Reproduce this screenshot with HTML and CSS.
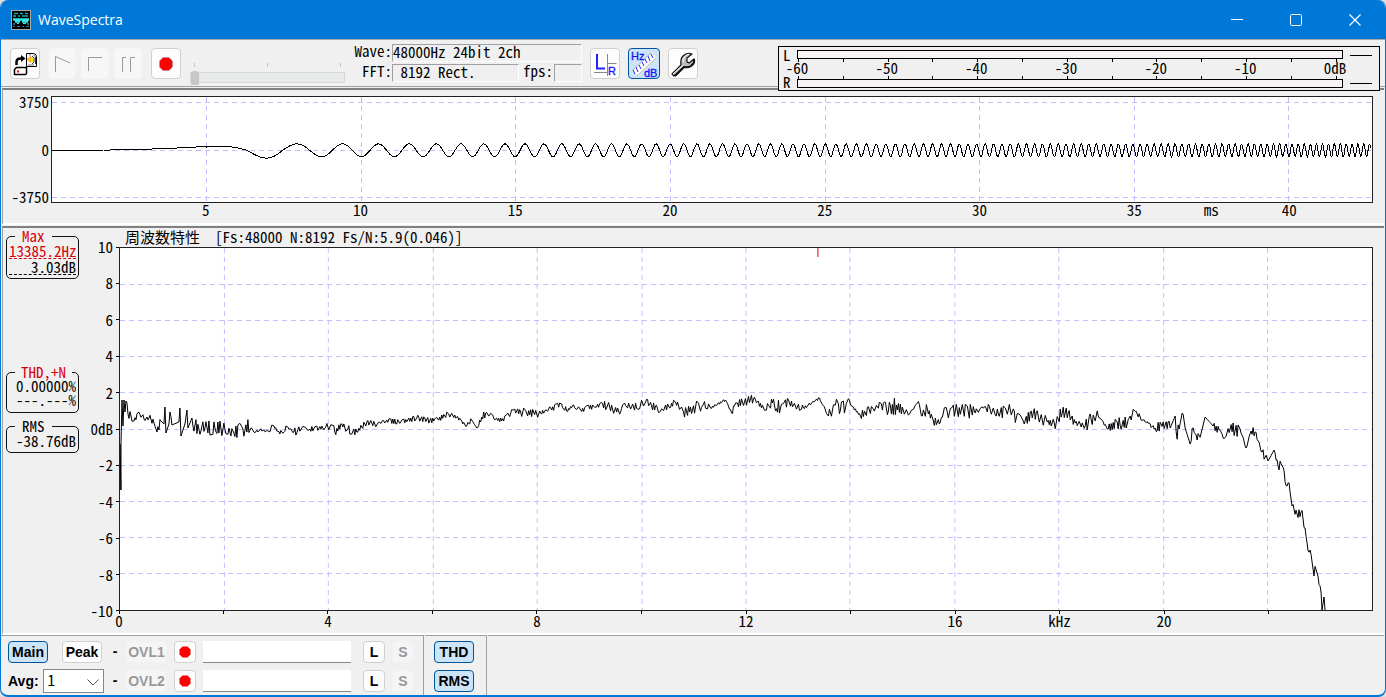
FILE: index.html
```html
<!DOCTYPE html>
<html lang="ja">
<head>
    <meta charset="UTF-8">
    <meta name="viewport" content="width=device-width, initial-scale=1.0">
    <title>WaveSpectra</title>
    <link rel="stylesheet" href="styles.css">
</head>
<body>
<div class="window">
    <header class="titlebar">
        <svg class="logo" width="20" height="20" viewBox="0 0 20 20">
            <rect x="0.5" y="0.5" width="19" height="19" fill="#000" stroke="#aaa"/>
            <path d="M3 3.500h4M9 3.500h3M14 3.500h3M2 6h3M7 6h2M11 6h6" stroke="#19a5a5" stroke-width="1.500"/>
            <path d="M2 9.500h16M4 11.500h5M11 11.500h6" stroke="#2ee6e6" stroke-width="2.500"/>
            <path d="M2 14h2M6 13.500h2M12 13.500h3M16 14h2" stroke="#2ee6e6"/>
            <path d="M2 16.500h2M6 16.500h3M11 16.500h2M15 16.500h3" stroke="#168f8f"/>
        </svg>
        <h1>WaveSpectra</h1>
        <div class="window-buttons">
            <button aria-label="Minimize"><svg width="12" height="12"><path d="M0 5.5h12" stroke="#fff"/></svg></button>
            <button aria-label="Maximize"><svg width="12" height="12"><rect x="0.5" y="0.5" width="11" height="11" rx="1" fill="none" stroke="#fff"/></svg></button>
            <button aria-label="Close"><svg width="12" height="12"><path d="M0.5 0.5l11 11M11.5 0.5l-11 11" stroke="#fff" stroke-width="1.2"/></svg></button>
        </div>
    </header>

    <div class="toolbar">
        <div class="transport">
            <button class="tool" aria-label="Open">
                <svg width="26" height="26" viewBox="0 0 26 26">
                    <path d="M4.500 14V11q0-3.500 4-3.500h2" fill="none" stroke="#000" stroke-width="2.500"/>
                    <path d="M9 4l4.500 3.500L9 11z" fill="#000"/>
                    <path d="M14.500 2.500h8l2 2V15.500h-10z" fill="#fff" stroke="#000"/>
                    <path d="M22 2v3h3M17 4h2M16 14h6" stroke="#777" fill="none"/>
                    <path d="M15 8.500l4-3v6z" fill="#f5e000" stroke="#e33" stroke-width="0.5"/>
                    <path d="M20 5l2 2v4l-2 2M23.500 6v7" stroke="#333" fill="none"/>
                    <path d="M20.500 7v4" stroke="#f5e000" stroke-width="1.500"/>
                    <path d="M2.500 18.500l2-2h10v6l-1 1h-11z" fill="#fff" stroke="#000" stroke-width="1.500"/>
                    <path d="M5 20.500h2" stroke="#f00" stroke-width="2"/>
                </svg>
            </button>
            <button class="tool off play" aria-label="Play" disabled><svg width="18" height="18"><path d="M2.5 17V1.5L17 8" fill="none" stroke="#999"/></svg></button>
            <button class="tool off" aria-label="Stop" disabled><svg width="18" height="18"><path d="M2.5 16V2.5H16" fill="none" stroke="#999"/></svg></button>
            <button class="tool off" aria-label="Pause" disabled><svg width="18" height="18"><path d="M3.500 17V2.500H7M11.500 17V2.500H16" fill="none" stroke="#999"/></svg></button>
            <button class="tool rec" aria-label="Record"><svg width="16" height="16"><path d="M5 1.500h6L14.500 5v6L11 14.500H5L1.500 11V5z" fill="#f00" stroke="#999" stroke-width="0.5"/></svg></button>
        </div>
        <div class="seek">
            <div class="seek-ticks"><i></i><i></i><i></i></div>
            <input type="range" min="0" max="100" value="0" aria-label="Position" disabled>
        </div>
        <div class="status mono">
            <span class="key">Wave:</span><span class="field">48000Hz 24bit 2ch</span>
            <span class="key">FFT:</span>
            <span class="split"><span class="field fft">&nbsp;8192 Rect.</span><span>fps:</span><span class="field fps"></span></span>
        </div>
        <div class="view-buttons">
            <button class="tool" aria-label="Left and right">
                <svg width="28" height="28" viewBox="0 0 28 28">
                    <path d="M16.500 4v22M16.500 13.500h9M3 22.500h13" stroke="#888"/>
                    <path d="M6 4v14.500H14" stroke="#22f" stroke-width="2" fill="none"/>
                    <text x="17" y="25" class="glyph">R</text>
                </svg>
            </button>
            <button class="tool on" aria-label="Frequency and level">
                <svg width="28" height="28" viewBox="0 0 28 28">
                    <path d="M2 21L21 3l6 5L8 26z" fill="#fff"/>
                    <path d="M5 24l-2-4M8 22l-2-5M11 19l-2-4M14 16l-2-4M17 13l-2-4M20 11l-2-5M23 8l-2-4" stroke="#22f"/>
                    <path d="M7 26L26 8M2 21L21 3" stroke="#aaa"/>
                    <text x="1" y="10" class="glyph">Hz</text>
                    <text x="14" y="27" class="glyph">dB</text>
                </svg>
            </button>
            <button class="tool" aria-label="Settings">
                <svg width="28" height="28" viewBox="0 0 28 28">
                    <path d="M3 24L12 15Q11 9 14 6q4-4 9-2l-5 4v4l2 1 5-4q1 5-3 7-3 2-7 1L5 26z" fill="#bbb" stroke="#111" stroke-width="1.200" stroke-linejoin="round"/>
                    <path d="M4 24L14 15M14 12q0-6 6-8" stroke="#fff" fill="none"/>
                    <path d="M6 26l9-9q4 1 7-1 4-3 3-7" stroke="#111" stroke-width="2" fill="none"/>
                </svg>
            </button>
        </div>
        <div class="meter mono">
            <div class="channels"><span>L</span><span>R</span></div>
            <div class="scale">
                <div class="bar"></div>
                <svg class="scale-ticks" viewBox="0 0 546 3" preserveAspectRatio="none"></svg>
                <div class="scale-labels"><span>-60</span><span>-50</span><span>-40</span><span>-30</span><span>-20</span><span>-10</span><span>0dB</span></div>
                <svg class="scale-ticks" viewBox="0 0 546 3" preserveAspectRatio="none"></svg>
                <div class="bar"></div>
            </div>
            <div class="peaks"><i></i><i></i></div>
        </div>
    </div>

    <section class="panel wave mono">
        <div class="y-axis"><span>3750</span><span>0</span><span>-3750</span></div>
        <svg class="plot" id="wave" viewBox="0 0 1320 105" preserveAspectRatio="none"></svg>
        <div class="x-axis">
            <span>5</span><span>10</span><span>15</span><span>20</span><span>25</span><span>30</span><span>35</span><span>ms</span><span>40</span>
        </div>
    </section>

    <section class="panel spectrum mono">
        <aside>
            <fieldset class="max">
                <legend class="red">Max</legend>
                <div class="dashed red">13385.2Hz</div>
                <div class="dashed">3.03dB</div>
            </fieldset>
            <fieldset class="thd">
                <legend class="red">THD,+N</legend>
                <div>0.00000%</div>
                <div>---.---%</div>
            </fieldset>
            <fieldset class="rms">
                <legend>RMS</legend>
                <div>-38.76dB</div>
            </fieldset>
        </aside>
        <div class="chart">
            <h2>周波数特性&nbsp; [Fs:48000 N:8192 Fs/N:5.9(0.046)]</h2>
            <div class="y-axis">
                <span>10</span><span>8</span><span>6</span><span>4</span><span>2</span><span>0dB</span><span>-2</span><span>-4</span><span>-6</span><span>-8</span><span>-10</span>
            </div>
            <svg class="y-ticks" id="yTicks" viewBox="0 0 3 362" preserveAspectRatio="none"></svg>
            <svg class="plot" id="spectrum" viewBox="0 0 1253 362" preserveAspectRatio="none"></svg>
            <svg class="x-ticks" id="xTicks" viewBox="0 0 1253 3" preserveAspectRatio="none"></svg>
            <div class="x-axis">
                <span>0</span><span>4</span><span>8</span><span>12</span><span>16</span><span>kHz</span><span>20</span>
            </div>
        </div>
    </section>

    <footer>
        <div class="group overlays">
            <div class="cell">
                <button class="small on">Main</button>
                <button class="small">Peak</button>
            </div>
            <span class="dash">-</span>
            <button class="small off" disabled>OVL1</button>
            <button class="small" aria-label="Record overlay 1"><svg width="14" height="14"><path d="M4.5 1.5h5l3 3v5l-3 3h-5l-3-3v-5z" fill="#f00"/></svg></button>
            <input type="text" aria-label="Overlay 1">
            <button class="small">L</button>
            <button class="small off" disabled>S</button>

            <div class="cell avg">
                <label for="avg">Avg:</label>
                <div class="select">
                    <select id="avg"><option>1</option></select>
                    <svg width="12" height="7"><path d="M0.5 0.5l5.500 5.500 5.500-5.500" fill="none" stroke="#555"/></svg>
                </div>
            </div>
            <span class="dash">-</span>
            <button class="small off" disabled>OVL2</button>
            <button class="small" aria-label="Record overlay 2"><svg width="14" height="14"><path d="M4.5 1.5h5l3 3v5l-3 3h-5l-3-3v-5z" fill="#f00"/></svg></button>
            <input type="text" aria-label="Overlay 2">
            <button class="small">L</button>
            <button class="small off" disabled>S</button>
        </div>
        <div class="group measures">
            <button class="small on">THD</button>
            <button class="small on">RMS</button>
        </div>
        <div class="group"></div>
    </footer>
</div>

<script>
    const wave = document.getElementById("wave");
    const spectrum = document.getElementById("spectrum");

    function path(d, name) {
        return '<path class="' + name + '" d="' + d + '"/>';
    }

    // level meter: a tick every 5 dB
    let ticks = "";
    for (let i = 0; i <= 12; i++) {
        ticks += "M" + (1.5 + Math.round(i * 44.8)) + " 0v3";
    }
    document.querySelectorAll(".scale-ticks").forEach(svg => {
        svg.innerHTML = path(ticks, "tick");
    });

    // waveform: 2048 samples of a rising sweep
    let grid = "M0 5.5H1320M0 53.5H1320M0 100.5H1320";
    for (let ms = 5; ms <= 40; ms += 5) {
        grid += "M" + (Math.floor(ms * 30.92) + 0.5) + " 0V105";
    }
    let line = "M0 53.5";
    for (let n = 0; n < 2048; n++) {
        const t = n / 48;
        let y;
        if (t < 5) {
            y = 4 * Math.pow(t / 5, 2.5);
        } else {
            const amp = t < 6.3 ? 4 : t < 7.4 ? 7.8 : 6.4;
            y = amp * Math.cos(Math.PI * 0.138 * (Math.pow(t - 3.75, 2) - 17.39));
        }
        line += "L" + (t * 30.92).toFixed(1) + " " + (53.3 - y).toFixed(1);
    }
    wave.innerHTML = path(grid, "grid") + path(line, "trace");

    // spectrum: [x, y, ripple]
    const points = [
        [0, 242, 0], [0, 196, 0], [1, 242, 0], [1, 196, 0], [2, 152, 0], [3, 178, 0], [4, 152, 0], [5, 164, 0], [6, 153, 0], [8, 166, 3],
        [11, 168, 3], [14, 173, 3], [19, 164, 2], [24, 171, 2], [29, 170, 2], [34, 175, 3], [37, 184, 0], [41, 173, 4], [44, 176, 0],
        [45, 159, 0], [46, 185, 0], [49, 176, 0], [50, 164, 0], [52, 177, 2], [59, 174, 0], [60, 160, 0], [61, 188, 0], [65, 176, 0],
        [67, 162, 0], [68, 180, 0], [72, 170, 0], [73, 178, 4], [85, 180, 5], [95, 180, 5], [105, 181, 5], [114, 185, 4], [123, 181, 5],
        [131, 180, 6], [134, 184, 1], [140, 182, 1], [148, 183, 1], [154, 178, 2], [160, 186, 1], [168, 179, 2], [174, 184, 1], [182, 180, 3],
        [190, 181, 2], [206, 179, 2], [218, 183, 3], [222, 176, 3], [228, 181, 3], [237, 184, 3], [247, 174, 2], [257, 177, 2], [264, 173, 1],
        [281, 174, 2], [297, 170, 2], [314, 173, 2], [329, 166, 2], [337, 169, 2], [347, 178, 1], [352, 172, 2], [357, 180, 0], [362, 169, 2],
        [366, 165, 3], [374, 170, 2], [382, 173, 2], [394, 162, 2], [401, 164, 2], [421, 165, 3], [442, 156, 2], [447, 163, 2], [454, 157, 1],
        [461, 162, 2], [483, 156, 2], [501, 164, 3], [505, 155, 2], [511, 161, 3], [526, 154, 3], [541, 163, 3], [556, 154, 2], [564, 164, 2],
        [584, 156, 4], [591, 160, 3], [606, 152, 1], [612, 165, 1], [618, 155, 3], [634, 151, 3], [647, 162, 2], [653, 155, 4], [661, 160, 5],
        [670, 155, 4], [684, 160, 3], [700, 150, 1], [709, 168, 1], [716, 157, 4], [721, 162, 5], [731, 156, 5], [741, 168, 1], [754, 161, 4],
        [762, 156, 3], [769, 163, 4], [777, 157, 6], [789, 167, 5], [798, 155, 1], [803, 168, 3], [808, 161, 4], [814, 173, 3], [820, 176, 3],
        [824, 165, 1], [838, 163, 5], [855, 163, 5], [867, 161, 2], [879, 166, 4], [889, 162, 5], [904, 173, 5], [914, 165, 4], [928, 174, 4],
        [935, 175, 3], [943, 165, 5], [949, 165, 6], [956, 175, 3], [966, 178, 2], [972, 172, 5], [979, 168, 4], [989, 181, 1], [998, 174, 3],
        [1008, 176, 5], [1011, 168, 2], [1018, 166, 4], [1024, 172, 2], [1031, 176, 1], [1038, 183, 2], [1044, 174, 5], [1051, 180, 4],
        [1056, 168, 0], [1057, 184, 0], [1060, 181, 7], [1063, 165, 0], [1066, 180, 6], [1071, 196, 0], [1074, 180, 5], [1078, 192, 2],
        [1083, 181, 3], [1086, 169, 0], [1094, 178, 0], [1100, 182, 3], [1104, 190, 2], [1111, 181, 3], [1121, 181, 5], [1127, 200, 1],
        [1132, 183, 2], [1136, 184, 5], [1143, 204, 2], [1149, 213, 4], [1155, 202, 0], [1159, 218, 2], [1163, 218, 5], [1168, 238, 3],
        [1170, 235, 3], [1173, 258, 2], [1178, 266, 3], [1182, 264, 3], [1186, 280, 4], [1189, 303, 1], [1191, 302, 2], [1194, 321, 3],
        [1198, 325, 4], [1202, 344, 2], [1203, 362, 0], [1205, 349, 0], [1206, 362, 0]
    ];
    let seed = 7;
    function random() {
        seed = (seed * 16807) % 2147483647;
        return seed / 2147483647;
    }
    line = "M0 242";
    let side = 1;
    for (let i = 1; i < points.length; i++) {
        const [x0, y0] = points[i - 1];
        const [x1, y1, ripple] = points[i];
        for (let x = x0 + 1; x < x1; x += random() < 0.6 ? 1 : 2) {
            side = random() < 0.85 ? -side : side;
            const y = y0 + (y1 - y0) * (x - x0) / (x1 - x0) + side * ripple * (0.5 + random());
            line += "L" + x + " " + y.toFixed(1);
        }
        line += "L" + x1 + " " + y1;
    }

    grid = "";
    let yTicks = "";
    let xTicks = "";
    for (let i = 0; i <= 10; i++) {
        const y = i * 36.2;
        yTicks += "M0 " + Math.min(361.5, Math.floor(y) + 0.5) + "h3";
        if (i > 0 && i < 10) grid += "M0 " + (Math.floor(y) + 0.5) + "H1253";
    }
    for (let i = 0; i <= 11; i++) {
        const x = Math.floor(i * 104.4) + 0.5;
        xTicks += "M" + x + " 0v3";
        if (i > 0) grid += "M" + x + " 0V362";
    }
    spectrum.innerHTML = path(grid, "grid") + path(line, "trace") + path("M698.5 0v9", "marker");
    document.getElementById("yTicks").innerHTML = path(yTicks, "tick");
    document.getElementById("xTicks").innerHTML = path(xTicks, "tick");
</script>
</body>
</html>
```
FILE: styles.css
```css
* {
    box-sizing: border-box;
}
body {
    margin: 0;
    background: #ddd;
    font-family: "Liberation Sans", Arial, sans-serif;
    font-size: 14px;
    color: #000;
}
button {
    display: flex;
    align-items: center;
    justify-content: center;
    padding: 0;
    font: inherit;
}
.window {
    display: flex;
    flex-direction: column;
    min-height: 100vh;
    background: #f0f0f0;
    border: 1px solid #0078d7;
    border-top: none;
    border-bottom-width: 2px;
    border-radius: 8px;
    overflow: hidden;
}
.mono {
    font-family: "Noto Sans CJK JP", monospace;
    font-feature-settings: "hwid";
    font-size: 15px;
    line-height: 16px;
}
.red {
    color: #d8000c;
}

/* title bar */
.titlebar {
    display: flex;
    align-items: center;
    height: 39px;
    padding-left: 10px;
    background: #0078d7;
    color: #fff;
}
.titlebar h1 {
    flex: 1;
    margin: 0 0 0 7px;
    font: 14px "Open Sans", sans-serif;
}
.window-buttons {
    display: flex;
    padding-right: 1px;
}
.window-buttons button {
    width: 59px;
    height: 39px;
    background: none;
    border: none;
}

/* toolbar */
.toolbar {
    display: flex;
    align-items: flex-start;
    height: 48px;
    padding: 4px 5px 0 9px;
    border-top: 1px solid #aaa;
    border-bottom: 1px solid #a0a0a0;
}
.transport {
    display: flex;
    gap: 5px;
    padding-top: 4px;
}
.tool {
    width: 30px;
    height: 31px;
    background: #fdfdfd;
    border: 1px solid #d0d0d0;
    border-radius: 4px;
}
.tool.off {
    width: 28px;
    background: #f7f7f7;
    border-color: #f4f4f4;
}
.tool.on {
    width: 32px;
    background: #cce4f7;
    border-color: #005499;
}
.play {
    margin-left: 3px;
}
.rec {
    margin-left: 4px;
}
.glyph {
    font: 11px "Liberation Sans", sans-serif;
    fill: #11f;
    stroke: #11f;
    stroke-width: 0.3px;
}
.seek {
    width: 155px;
    margin: 19px 9px 0 9px;
}
.seek-ticks {
    display: flex;
    justify-content: space-between;
    padding: 0 4px;
}
.seek-ticks i {
    width: 1px;
    height: 4px;
    background: #c4c4c4;
}
.seek input {
    appearance: none;
    display: block;
    width: 100%;
    height: 11px;
    margin: 5px 0 0;
    background: #e7eaea;
    border: 1px solid #d6d6d6;
}
.seek input::-webkit-slider-thumb {
    appearance: none;
    width: 8px;
    height: 14px;
    background: #c8c8c8;
    border-radius: 3px 3px 0 0;
}
.status {
    display: grid;
    grid-template-columns: 38px 190px;
    grid-auto-rows: 18px;
    row-gap: 2px;
    line-height: 14px;
}
.key {
    text-align: right;
}
.field {
    border: 1px solid #fff;
    border-top-color: #a0a0a0;
    border-left-color: #a0a0a0;
    white-space: nowrap;
}
.split {
    display: flex;
}
.fft {
    width: 127px;
    margin-right: 4px;
}
.fps {
    flex: 1;
    margin-left: 1px;
}
.view-buttons {
    display: flex;
    gap: 8px;
    padding: 4px 0 0 8px;
}

/* level meter, hangs over the edge of the toolbar */
.meter {
    position: relative;
    z-index: 1;
    display: flex;
    flex: 1;
    height: 45px;
    margin: 2px 0 0 80px;
    padding-left: 4px;
    background: #f0f0f0;
    border: 1px solid #000;
}
.channels {
    display: flex;
    flex-direction: column;
    justify-content: space-between;
    width: 14px;
}
.scale {
    flex: 1;
    padding-top: 3px;
}
.bar {
    height: 9px;
    background: #f7f3f7;
    border: 1px solid #000;
}
.scale-ticks {
    display: block;
    width: 100%;
    height: 3px;
}
.scale-labels {
    display: flex;
    justify-content: space-between;
    height: 14px;
    padding-right: 8px;
    line-height: 12px;
}
.scale-labels span {
    display: flex;
    justify-content: center;
    width: 0;
}
.peaks {
    display: flex;
    flex-direction: column;
    justify-content: space-between;
    width: 36px;
    padding: 8px 7px 6px;
}
.peaks i {
    height: 1px;
    background: #000;
}

/* plots */
.panel {
    border-top: 2px solid #808080;
    border-left: 1px solid #a0a0a0;
    border-bottom: 2px solid #fff;
    margin: 1px 1px 0 1px;
}
.plot {
    display: block;
    width: 100%;
    background: #fff;
    border: 1px solid #222;
}
.grid, .trace, .tick, .marker {
    fill: none;
    vector-effect: non-scaling-stroke;
    shape-rendering: crispEdges;
}
.grid {
    stroke: #c0c0ff;
    stroke-dasharray: 5 4;
}
.trace, .tick {
    stroke: #000;
}
.marker {
    stroke: #d8000c;
}
.y-axis {
    display: flex;
    flex-direction: column;
    justify-content: space-between;
}
.y-axis span {
    display: flex;
    align-items: center;
    justify-content: flex-end;
    height: 0;
}
.x-axis span {
    display: flex;
    justify-content: center;
    width: 0;
}
.wave {
    display: grid;
    grid-template-columns: 48px 1fr;
    grid-template-rows: 107px 1fr;
    height: 137px;
    padding: 6px 11px 0 0;
}
.wave .y-axis {
    padding: 6px 2px;
}
.wave .plot {
    height: 107px;
}
.wave .x-axis {
    display: grid;
    grid-column: 2;
    grid-template-columns: repeat(7, 155fr) 77fr 78fr 84fr;
    line-height: 14px;
}
.wave .x-axis span {
    justify-self: end;
}
.spectrum {
    display: flex;
    flex: 1;
    padding: 1px 11px 0 3px;
}
aside {
    width: 73px;
}
fieldset {
    min-width: 0;
    margin: 0 0 8px;
    padding: 0 2px;
    border: 1px solid #111;
    border-radius: 5px;
    text-align: right;
}
legend {
    margin-left: 6px;
    margin-right: auto;
    padding: 0 7px;
    line-height: 14px;
}
.max {
    height: 50px;
    margin-bottom: 86px;
}
.max div {
    height: 16px;
}
.thd {
    height: 48px;
    margin-bottom: 6px;
}
.thd legend {
    padding: 0 6px;
}
.thd div {
    height: 14px;
    line-height: 14px;
}
.rms {
    height: 34px;
}
.dashed {
    border-bottom: 1px dashed;
}
.chart {
    flex: 1;
    display: grid;
    grid-template-columns: 37px 3px 1fr;
    grid-template-rows: 18px 364px 3px 1fr;
}
.chart h2 {
    grid-column: 3;
    margin: 0 0 0 6px;
    font-size: 15px;
    font-weight: normal;
}
.chart .y-axis {
    padding-right: 3px;
}
.chart .plot {
    height: 364px;
}
.y-ticks {
    width: 3px;
    height: 364px;
}
.x-ticks {
    grid-column: 3;
    width: 100%;
    height: 3px;
}
.chart .x-axis {
    display: grid;
    grid-column: 3;
    grid-template-columns: repeat(4, 2fr) 1fr 1fr 2fr;
    height: 18px;
    line-height: 14px;
}

/* bottom bar */
footer {
    display: flex;
    height: 60px;
    font-weight: bold;
}
.group {
    padding: 5px 8px 0 7px;
    border-top: 1px solid #a0a0a0;
    border-right: 1px solid #a0a0a0;
    margin-right: 1px;
}
.group:last-child {
    flex: 1;
    border-right: none;
}
.overlays {
    display: grid;
    grid-template-columns: 96px 8px 41px 22px 153px 22px 22px;
    grid-auto-rows: 22px;
    column-gap: 7px;
    row-gap: 7px;
    width: 423px;
}
.overlays input {
    width: 148px;
    background: #fff;
    border: none;
    border-bottom: 1px solid #888;
}
.small {
    height: 22px;
    background: #fdfdfd;
    border: 1px solid #d0d0d0;
    border-radius: 4px;
}
.small.on {
    width: 40px;
    background: #cce4f7;
    border-color: #005499;
}
.small.off {
    background: #f5f5f5;
    border-color: #f2f2f2;
    color: #999;
}
.cell {
    display: flex;
    align-items: center;
    gap: 14px;
}
.cell .small {
    width: 40px;
}
.avg {
    gap: 4px;
}
.dash {
    line-height: 20px;
    text-align: center;
}
.select {
    position: relative;
    flex: 1;
}
.select select {
    appearance: none;
    display: block;
    width: 100%;
    height: 24px;
    padding: 0 4px 2px;
    background: #fff;
    border: 1px solid #888;
    border-radius: 0;
    font: 15px/20px "Noto Sans CJK JP", sans-serif;
    font-feature-settings: "hwid";
}
.select svg {
    position: absolute;
    top: 10px;
    right: 5px;
}
.measures {
    display: flex;
    flex-direction: column;
    gap: 7px;
    width: 62px;
    padding-left: 9px;
}
```
